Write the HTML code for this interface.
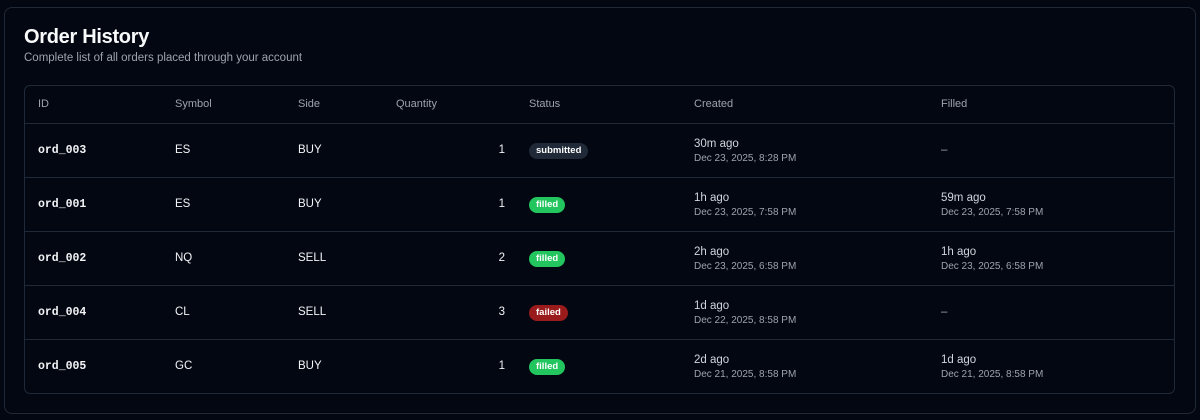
<!DOCTYPE html>
<html><head><style>
*{margin:0;padding:0;box-sizing:border-box}
body{width:1200px;height:420px;background:#030712;font-family:"Liberation Sans",sans-serif;color:#f3f4f6;position:relative;overflow:hidden}
.card{position:absolute;left:4px;top:7px;width:1192px;height:407px;border:1px solid #1f2937;border-radius:8px;background:#030712}
h1{position:absolute;left:19px;top:18px;font-size:20px;font-weight:700;letter-spacing:-0.3px;color:#f9fafb}
.sub{position:absolute;left:19px;top:44px;font-size:11.5px;color:#9ca3af}
.tbl{position:absolute;left:19px;top:77px;width:1151px;height:309px;border:1px solid #1f2937;border-radius:6px;overflow:hidden}
.row{position:absolute;left:0;width:100%;height:54px;border-top:1px solid #1f2937}
.hdr{position:absolute;top:0;left:0;width:100%;height:38px}
.c{position:absolute;font-size:11.5px}
.hdr .c{top:12px;color:#9ca3af;font-size:11px}
.row .c{top:20px;color:#f3f4f6}
.mono{font-family:"Liberation Mono",monospace;font-size:11.5px;font-weight:700;color:#e5e7eb}
.badge{position:absolute;top:19px;height:16px;border-radius:8px;font-size:9.5px;font-weight:700;line-height:16px;padding:0 7px;color:#fff}
.t1{position:absolute;top:14px;font-size:11.5px;color:#d1d5db}
.t2{position:absolute;top:29px;font-size:10px;color:#9ca3af}
</style></head><body>
<div class="card">
<h1>Order History</h1>
<div class="sub">Complete list of all orders placed through your account</div>
<div class="tbl">
<div class="hdr"><span class="c" style="left:13px">ID</span><span class="c" style="left:150px">Symbol</span><span class="c" style="left:273px">Side</span><span class="c" style="left:371px">Quantity</span><span class="c" style="left:504px">Status</span><span class="c" style="left:669px">Created</span><span class="c" style="left:916px">Filled</span></div>

<div class="row" style="top:37px"><span class="c mono" style="left:13px">ord_003</span><span class="c" style="left:150px">ES</span><span class="c" style="left:273px">BUY</span><span class="c" style="left:472px;width:8px;text-align:right">1</span><span class="badge" style="left:504px;background:#1f2937">submitted</span><span class="t1" style="left:669px">30m ago</span><span class="t2" style="left:669px">Dec 23, 2025, 8:28 PM</span><span class="c" style="left:916px;color:#9ca3af">–</span></div>

<div class="row" style="top:91px"><span class="c mono" style="left:13px">ord_001</span><span class="c" style="left:150px">ES</span><span class="c" style="left:273px">BUY</span><span class="c" style="left:472px;width:8px;text-align:right">1</span><span class="badge" style="left:504px;background:#22c55e">filled</span><span class="t1" style="left:669px">1h ago</span><span class="t2" style="left:669px">Dec 23, 2025, 7:58 PM</span><span class="t1" style="left:916px">59m ago</span><span class="t2" style="left:916px">Dec 23, 2025, 7:58 PM</span></div>

<div class="row" style="top:145px"><span class="c mono" style="left:13px">ord_002</span><span class="c" style="left:150px">NQ</span><span class="c" style="left:273px">SELL</span><span class="c" style="left:472px;width:8px;text-align:right">2</span><span class="badge" style="left:504px;background:#22c55e">filled</span><span class="t1" style="left:669px">2h ago</span><span class="t2" style="left:669px">Dec 23, 2025, 6:58 PM</span><span class="t1" style="left:916px">1h ago</span><span class="t2" style="left:916px">Dec 23, 2025, 6:58 PM</span></div>

<div class="row" style="top:199px"><span class="c mono" style="left:13px">ord_004</span><span class="c" style="left:150px">CL</span><span class="c" style="left:273px">SELL</span><span class="c" style="left:472px;width:8px;text-align:right">3</span><span class="badge" style="left:504px;background:#991b1b">failed</span><span class="t1" style="left:669px">1d ago</span><span class="t2" style="left:669px">Dec 22, 2025, 8:58 PM</span><span class="c" style="left:916px;color:#9ca3af">–</span></div>

<div class="row" style="top:253px"><span class="c mono" style="left:13px">ord_005</span><span class="c" style="left:150px">GC</span><span class="c" style="left:273px">BUY</span><span class="c" style="left:472px;width:8px;text-align:right">1</span><span class="badge" style="left:504px;background:#22c55e">filled</span><span class="t1" style="left:669px">2d ago</span><span class="t2" style="left:669px">Dec 21, 2025, 8:58 PM</span><span class="t1" style="left:916px">1d ago</span><span class="t2" style="left:916px">Dec 21, 2025, 8:58 PM</span></div>
</div>
</div>
</body></html>
